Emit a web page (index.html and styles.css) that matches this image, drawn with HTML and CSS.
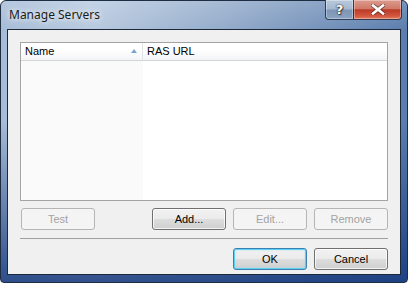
FILE: index.html
```html
<!DOCTYPE html>
<html>
<head>
<meta charset="utf-8">
<link rel="stylesheet" href="styles.css">
</head>
<body>
<div class="window">
  <div class="titlebar">
    <span class="title">Manage Servers</span>
    <div class="caption-buttons">
      <div class="cb help"><span class="glyph">?</span></div>
      <div class="cb close">
        <svg width="14" height="11" viewBox="0 0 14 11">
          <path d="M2 1.5 L12 9.5 M12 1.5 L2 9.5" stroke="#2b1410" stroke-width="4.2" stroke-linecap="square" opacity="0.55"/>
          <path d="M2 1.5 L12 9.5 M12 1.5 L2 9.5" stroke="#ffffff" stroke-width="2.6" stroke-linecap="square"/>
        </svg>
      </div>
    </div>
  </div>
  <div class="client">
    <div class="list">
      <div class="list-header">
        <div class="col col-name"><span>Name</span><span class="sort"></span></div>
        <div class="col col-url">RAS URL</div>
      </div>
      <div class="list-body">
        <div class="body-name"></div>
        <div class="body-url"></div>
      </div>
    </div>
    <div class="row actions">
      <button class="btn test" disabled>Test</button>
      <span class="spacer"></span>
      <button class="btn">Add...</button>
      <button class="btn" disabled>Edit...</button>
      <button class="btn" disabled>Remove</button>
    </div>
    <div class="separator"></div>
    <div class="row footer">
      <button class="btn default">OK</button>
      <button class="btn">Cancel</button>
    </div>
  </div>
</div>
</body>
</html>
```
FILE: styles.css
```css
html, body {
  margin: 0;
  padding: 0;
  width: 408px;
  height: 283px;
  overflow: hidden;
  background: #ffffff;
}

.window {
  box-sizing: border-box;
  width: 408px;
  height: 283px;
  border: 1px solid #1f2d42;
  border-radius: 6px 6px 4px 4px;
  padding: 0 6px 7px 6px;
  display: flex;
  flex-direction: column;
  background:
    linear-gradient(180deg, rgba(255,255,255,0.18) 0px, rgba(255,255,255,0) 30px, rgba(20,50,110,0.0) 120px, rgba(15,50,120,0.8) 100%),
    linear-gradient(90deg, #a6bcd6 0%, #b8cae0 22%, #93abca 55%, #5a7dad 100%);
}

.titlebar {
  height: 28px;
  display: flex;
  align-items: flex-start;
}

.title {
  font-family: "Noto Sans", "Open Sans", sans-serif;
  font-size: 12px;
  line-height: 16px;
  padding: 6px 0 0 2px;
  color: #1b1b1b;
  text-shadow: 0 0 5px rgba(255,255,255,0.9), 0 0 9px rgba(255,255,255,0.6);
}

.caption-buttons {
  margin-left: auto;
  margin-top: -1px;
  margin-right: -1px;
  display: flex;
}

.cb {
  box-sizing: border-box;
  height: 20px;
  display: flex;
  align-items: center;
  justify-content: center;
  border: 1px solid rgba(25, 40, 65, 0.85);
  border-top: none;
  box-shadow: inset 0 0 0 1px rgba(255,255,255,0.35);
}

.help {
  width: 28px;
  border-right: none;
  border-radius: 0 0 0 4px;
  background: linear-gradient(180deg, #b9c9dc 0%, #a5b8cf 48%, #7c95b4 52%, #8aa3c2 100%);
}

.help .glyph {
  font-family: "DejaVu Sans", sans-serif;
  font-weight: bold;
  font-size: 13px;
  color: #ffffff;
  line-height: 13px;
  text-shadow: 0 0 1px #222, 0 0 2px #333, 1px 1px 1px rgba(0,0,0,0.5);
}

.close {
  width: 49px;
  border-radius: 0 0 4px 0;
  background: linear-gradient(180deg, #dc9b8e 0%, #cf7a6a 45%, #bd3a27 52%, #d0533c 80%, #e0775a 100%);
}

.close svg {
  display: block;
}

.client {
  flex: 1;
  display: flex;
  flex-direction: column;
  border: 1px solid #1c293b;
  background: #f0f0f0;
  padding: 12px 12px 0 12px;
  font-family: "Liberation Sans", Arial, sans-serif;
  font-size: 11px;
}

.list {
  box-sizing: border-box;
  height: 159px;
  border: 1px solid #a3a3a3;
  background: #ffffff;
  display: flex;
  flex-direction: column;
}

.list-header {
  box-sizing: border-box;
  height: 18px;
  display: flex;
  border-bottom: 1px solid #d5d5d5;
  background: linear-gradient(180deg, #ffffff 0%, #ffffff 40%, #f3f4f6 100%);
}

.col {
  box-sizing: border-box;
  display: flex;
  align-items: center;
  padding-left: 4px;
  color: #000;
  font-size: 11px;
  line-height: 17px;
}

.col-name {
  width: 122px;
  border-right: 1px solid #e2e3e5;
}

.sort {
  margin-left: auto;
  margin-right: 5px;
  margin-top: -2px;
  width: 0;
  height: 0;
  border-left: 3.5px solid transparent;
  border-right: 3.5px solid transparent;
  border-bottom: 4px solid #7aa4cf;
}

.col-url {
  flex: 1;
}

.list-body {
  flex: 1;
  display: flex;
}

.body-name {
  width: 122px;
  background: #fafafa;
}

.body-url {
  flex: 1;
  background: #ffffff;
}

.row {
  display: flex;
  gap: 7px;
}

.actions {
  margin-top: 7px;
}

.spacer {
  flex: 1;
}

.footer {
  margin-top: 9px;
  justify-content: flex-end;
}

.btn {
  box-sizing: border-box;
  width: 74px;
  height: 22px;
  margin: 0;
  padding: 0;
  border: 1px solid #707070;
  border-radius: 3px;
  font-family: "Liberation Sans", Arial, sans-serif;
  font-size: 11px;
  color: #000000;
  background: linear-gradient(180deg, #f2f2f2 0%, #ebebeb 48%, #dddddd 52%, #cfcfcf 100%);
  box-shadow: inset 0 0 0 1px rgba(255,255,255,0.75);
}

.btn.test {
  margin-left: 1px;
}

.btn:disabled {
  border-color: #b5b5b5;
  background: #f4f4f4;
  color: #a3a3a3;
  box-shadow: none;
}

.btn.default {
  border-color: #3c7fb1;
  box-shadow: inset 0 0 0 1px #5fd0f5, inset 0 0 2px 1px rgba(120, 215, 245, 0.5);
  background: linear-gradient(180deg, #f2f2f2 0%, #ebebeb 48%, #dddddd 52%, #cfcfcf 100%);
}

.separator {
  margin-top: 8px;
  height: 1px;
  background: #a0a0a0;
}
```
